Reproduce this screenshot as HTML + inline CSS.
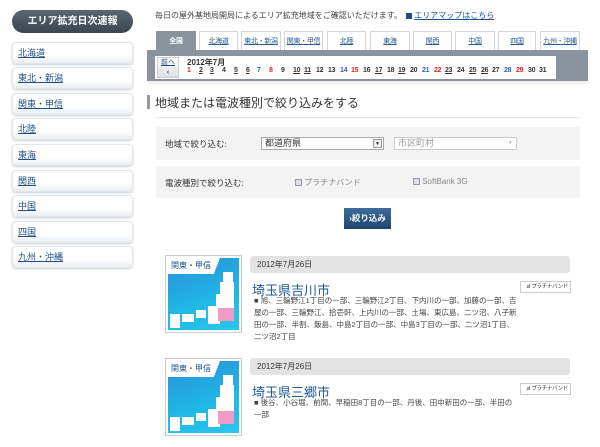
<!DOCTYPE html>
<html><head><meta charset="utf-8"><style>
*{margin:0;padding:0;box-sizing:border-box}
body{width:600px;height:447px;overflow:hidden;background:#fff;font-family:"Liberation Sans","Noto Sans CJK JP",sans-serif;font-size:9px;color:#333;position:relative}
.a{position:absolute}
a{color:#1a4f8a}
.pill{left:12px;top:10px;width:121px;height:23px;border-radius:12px;background:linear-gradient(#5b6672,#3c4650);color:#fff;font-size:10px;font-weight:bold;text-align:center;line-height:23px}
.side{left:12px;width:121px;height:22px;border:1px solid #e2e6ea;border-radius:4px;background:linear-gradient(#fff 60%,#e9eef3);box-shadow:0 1px 2px #c8ced4;padding-left:5px;line-height:21px;font-size:9px}
.side a{color:#1f4f86;text-decoration:underline}
.tab{top:31px;height:19px;border:1px solid #d6d6d6;border-bottom:none;background:#fff;text-align:center;line-height:19px;font-size:7px;white-space:nowrap;overflow:hidden;letter-spacing:-0.3px}
.tab a{color:#2a5b8f;text-decoration:underline}
.day{font-size:7px;font-weight:bold;color:#333;letter-spacing:-0.3px}
.sel{height:13px;border:1px solid #aaa;background:#fff;font-size:9px;line-height:11px;padding-left:3px}
.img{width:77px;height:78px;border:1px solid #ccc;background:#fff;padding:2px}
.img .in{width:100%;height:100%;background:linear-gradient(160deg,#2a8ed9,#20b8e6 60%,#2bc5ee);position:relative;overflow:hidden}
.lbl{position:absolute;left:0;top:0;width:52px;height:16px;background:#fff;clip-path:polygon(0 0,100% 0,88% 100%,0 100%);color:#1f4f86;font-size:8px;line-height:16px;padding-left:3px}
.date{left:250px;width:320px;height:17px;background:#e3e3e3;border-radius:3px;font-size:8px;line-height:17px;padding-left:7px}
.ttl{left:252px;font-size:13px;color:#1f5a94}
.badge{left:520px;width:51px;height:12px;border:1px solid #ccc;font-size:5.5px;line-height:10px;text-align:right;padding-right:2px;color:#333;white-space:nowrap;overflow:hidden;letter-spacing:-0.3px}
.desc{left:254px;width:265px;font-size:7.5px;line-height:12px;color:#444}
</style></head><body>
<div class="a pill">エリア拡充日次速報</div>
<div class="a side" style="top:42px"><a>北海道</a></div>
<div class="a side" style="top:67px"><a>東北・新潟</a></div>
<div class="a side" style="top:93px"><a>関東・甲信</a></div>
<div class="a side" style="top:118px"><a>北陸</a></div>
<div class="a side" style="top:144px"><a>東海</a></div>
<div class="a side" style="top:170px"><a>関西</a></div>
<div class="a side" style="top:195px"><a>中国</a></div>
<div class="a side" style="top:221px"><a>四国</a></div>
<div class="a side" style="top:246px"><a>九州・沖縄</a></div>

<div class="a" style="left:155px;top:10px;font-size:8px;color:#444">毎日の屋外基地局開局によるエリア拡充地域をご確認いただけます。　<span style="display:inline-block;width:6px;height:6px;background:#1f4f86;vertical-align:middle"></span> <a style="text-decoration:underline">エリアマップはこちら</a></div>

<div class="a" style="left:147px;top:50px;width:441px;height:31px;background:#8a939c;box-shadow:0 3px 3px #eee"></div>
<div class="a tab" style="left:156px;width:40px;background:#8a939c;border-color:#8a939c;color:#fff;font-weight:bold">全国</div>
<div class="a tab" style="left:199px;width:39px"><a>北海道</a></div>
<div class="a tab" style="left:241px;width:40px"><a>東北・新潟</a></div>
<div class="a tab" style="left:284px;width:39px"><a>関東・甲信</a></div>
<div class="a tab" style="left:327px;width:39px"><a>北陸</a></div>
<div class="a tab" style="left:370px;width:40px"><a>東海</a></div>
<div class="a tab" style="left:413px;width:39px"><a>関西</a></div>
<div class="a tab" style="left:455px;width:40px"><a>中国</a></div>
<div class="a tab" style="left:498px;width:38px"><a>四国</a></div>
<div class="a tab" style="left:540px;width:40px"><a>九州・沖縄</a></div>

<div class="a" style="left:155px;top:56px;width:401px;height:23px;background:#fff"></div>
<div class="a" style="left:157px;top:57px;width:22px;height:21px;background:linear-gradient(#fff,#dde2e7);border:1px solid #ccc;font-size:7px;text-align:center;line-height:10px;color:#1f4f86"><u>前へ</u><br><b>&lsaquo;</b></div>
<div class="a" style="left:187px;top:57px;font-size:8px;font-weight:bold">2012年7月</div>

<div class="a" style="left:147px;top:95px;width:3px;height:14px;background:#999"></div>
<div class="a" style="left:155px;top:94px;font-size:12px;color:#333">地域または電波種別で絞り込みをする</div>
<div class="a" style="left:156px;top:117px;width:424px;height:1px;background:#e5e5e5"></div>

<div class="a" style="left:156px;top:127px;width:424px;height:33px;background:#f3f3f3"></div>
<div class="a" style="left:165px;top:138px;font-size:8.5px">地域で絞り込む:</div>
<div class="a sel" style="left:261px;top:137px;width:123px">都道府県<span style="position:absolute;right:1px;top:1px;width:9px;height:9px;border:1px solid #999;background:#eee;font-size:5px;line-height:8px;text-align:center">▼</span></div>
<div class="a sel" style="left:394px;top:137px;width:123px;color:#999;border-color:#ccc">市区町村<span style="position:absolute;right:1px;top:1px;width:9px;height:9px;font-size:5px;line-height:8px;text-align:center;color:#bbb">▼</span></div>
<div class="a" style="left:156px;top:166px;width:424px;height:32px;background:#f3f3f3"></div>
<div class="a" style="left:165px;top:177px;font-size:8.5px">電波種別で絞り込む:</div>
<div class="a" style="left:295px;top:177px;font-size:8px;color:#888"><span style="display:inline-block;width:7px;height:7px;border:1px solid #999;background:#dde;vertical-align:middle"></span> プラチナバンド</div>
<div class="a" style="left:413px;top:177px;font-size:8px;color:#888"><span style="display:inline-block;width:7px;height:7px;border:1px solid #999;background:#dde;vertical-align:middle"></span> SoftBank 3G</div>
<div class="a" style="left:344px;top:208px;width:47px;height:21px;background:linear-gradient(#3e6d9a,#1d4470);color:#fff;font-size:8.5px;font-weight:bold;text-align:center;line-height:21px">›絞り込み</div>

<div class="a img" style="left:165px;top:255px"><div class="in"><div class="lbl">関東・甲信</div>
<svg class="a" style="left:0;top:0" width="73" height="74"><g fill="#fff"><rect x="55" y="14" width="10" height="10"/><rect x="52" y="24" width="14" height="12"/><rect x="48" y="36" width="18" height="16"/><rect x="40" y="48" width="12" height="18"/><rect x="28" y="52" width="10" height="8"/><rect x="14" y="56" width="12" height="8"/><rect x="2" y="56" width="10" height="14"/></g><rect x="50" y="50" width="16" height="13" fill="#f29ac6"/></svg></div></div>
<div class="a date" style="top:256px">2012年7月26日</div>
<div class="a ttl" style="top:280px">埼玉県吉川市</div>
<div class="a badge" style="top:281px">.ııl プラチナバンド</div>
<div class="a desc" style="top:295px">■ 旭、三輪野江1丁目の一部、三輪野江2丁目、下内川の一部、加藤の一部、吉屋の一部、三輪野江、拾壱軒、上内川の一部、土場、東広島、二ツ沼、八子新田の一部、半割、飯島、中島2丁目の一部、中島3丁目の一部、二ツ沼1丁目、二ツ沼2丁目</div>

<div class="a img" style="left:165px;top:358px"><div class="in"><div class="lbl">関東・甲信</div>
<svg class="a" style="left:0;top:0" width="73" height="74"><g fill="#fff"><rect x="55" y="14" width="10" height="10"/><rect x="52" y="24" width="14" height="12"/><rect x="48" y="36" width="18" height="16"/><rect x="40" y="48" width="12" height="18"/><rect x="28" y="52" width="10" height="8"/><rect x="14" y="56" width="12" height="8"/><rect x="2" y="56" width="10" height="14"/></g><rect x="50" y="50" width="16" height="13" fill="#f29ac6"/></svg></div></div>
<div class="a date" style="top:358px">2012年7月26日</div>
<div class="a ttl" style="top:382px">埼玉県三郷市</div>
<div class="a badge" style="top:383px">.ııl プラチナバンド</div>
<div class="a desc" style="top:397px">■ 後谷、小谷堀、前間、早稲田8丁目の一部、丹後、田中新田の一部、半田の一部</div>

<div class="a" style="left:187px;top:67px;width:370px;height:10px">
<span class="a day" style="left:0;color:#d22">1</span><span class="a day" style="left:12px;text-decoration:underline">2</span><span class="a day" style="left:23px;text-decoration:underline">3</span><span class="a day" style="left:35px">4</span><span class="a day" style="left:47px;text-decoration:underline">5</span><span class="a day" style="left:59px;text-decoration:underline">6</span><span class="a day" style="left:70px;color:#2566b0">7</span><span class="a day" style="left:82px;color:#d22">8</span><span class="a day" style="left:94px">9</span><span class="a day" style="left:106px;text-decoration:underline">10</span><span class="a day" style="left:117px;text-decoration:underline">11</span><span class="a day" style="left:129px">12</span><span class="a day" style="left:141px">13</span><span class="a day" style="left:153px;color:#2566b0">14</span><span class="a day" style="left:164px;color:#d22">15</span><span class="a day" style="left:176px">16</span><span class="a day" style="left:188px;text-decoration:underline">17</span><span class="a day" style="left:200px">18</span><span class="a day" style="left:211px;text-decoration:underline">19</span><span class="a day" style="left:223px">20</span><span class="a day" style="left:235px;color:#2566b0">21</span><span class="a day" style="left:247px;color:#d22">22</span><span class="a day" style="left:258px;text-decoration:underline">23</span><span class="a day" style="left:270px">24</span><span class="a day" style="left:282px;text-decoration:underline">25</span><span class="a day" style="left:294px;text-decoration:underline">26</span><span class="a day" style="left:305px">27</span><span class="a day" style="left:317px;color:#2566b0">28</span><span class="a day" style="left:329px;color:#d22">29</span><span class="a day" style="left:341px">30</span><span class="a day" style="left:352px">31</span>
</div>
</body></html>
